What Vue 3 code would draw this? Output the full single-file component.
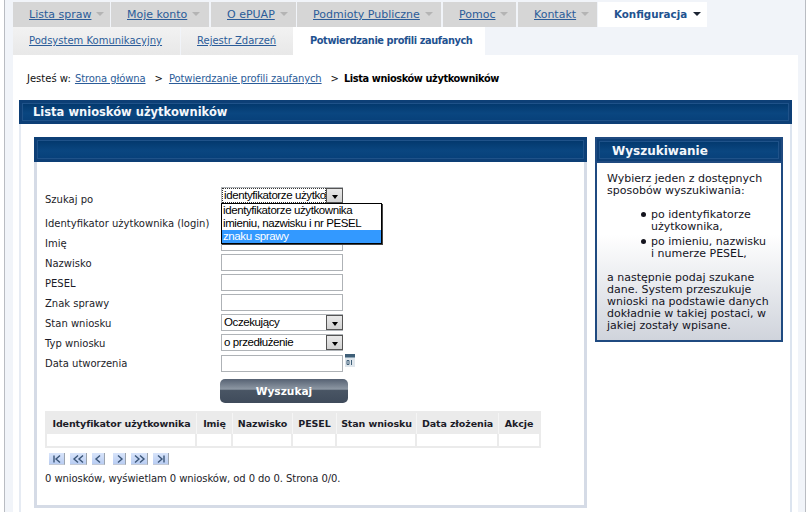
<script setup>
const topTabs = [
  { label: 'Lista spraw', w: 97, mr: 1 },
  { label: 'Moje konto', w: 98, mr: 2 },
  { label: 'O ePUAP', w: 85, mr: 1 },
  { label: 'Podmioty Publiczne', w: 144, mr: 2 },
  { label: 'Pomoc', w: 73, mr: 2 },
  { label: 'Kontakt', w: 79, mr: 1 },
]
const subTabs = [
  { label: 'Podsystem Komunikacyjny', w: 167, mr: 1 },
  { label: 'Rejestr Zdarzeń', w: 112, mr: 0 },
]
const columns = [
  { label: 'Identyfikator użytkownika', w: 150 },
  { label: 'Imię', w: 36 },
  { label: 'Nazwisko', w: 60 },
  { label: 'PESEL', w: 44 },
  { label: 'Stan wniosku', w: 80 },
  { label: 'Data złożenia', w: 82 },
  { label: 'Akcje', w: 40 },
]
const pager = [
  { w: 16, d: 'M5 2.5v7M11 2.5L7 6l4 3.5' },
  { w: 17, d: 'M8 2.5L4 6l4 3.5M13 2.5L9 6l4 3.5' },
  { w: 13, d: 'M8 2.5L4 6l4 3.5' },
  { w: 13, d: 'M5 2.5L9 6l-4 3.5' },
  { w: 17, d: 'M4 2.5L8 6l-4 3.5M9 2.5l4 3.5-4 3.5' },
  { w: 16, d: 'M5 2.5L9 6l-4 3.5M11 2.5v7' },
]
const pagerGaps = [5, 5, 8, 5, 5, 0]
</script>

<template>
  <div class="page">
    <nav class="tabs top">
      <a
        v-for="t in topTabs"
        :key="t.label"
        class="tab"
        :style="{ width: t.w + 'px', marginRight: t.mr + 'px' }"
      >
        <span class="link">{{ t.label }}</span><i class="caret"></i>
      </a>
      <a class="tab active-top"><span>Konfiguracja</span><i class="caret dark"></i></a>
    </nav>
    <nav class="tabs sub">
      <a
        v-for="t in subTabs"
        :key="t.label"
        class="subtab"
        :style="{ width: t.w + 'px', marginRight: t.mr + 'px' }"
      >
        <span class="link">{{ t.label }}</span>
      </a>
      <a class="subtab active-sub">Potwierdzanie profili zaufanych</a>
    </nav>

    <main class="content">
      <div class="crumbs">
        Jesteś w: <span class="link first-link">Strona główna</span>
        <span class="sep">&gt;</span>
        <span class="link">Potwierdzanie profili zaufanych</span>
        <span class="sep">&gt;</span>
        <b>Lista wniosków użytkowników</b>
      </div>

      <section class="outer">
        <h1 class="bar main-bar">Lista wniosków użytkowników</h1>
        <div class="columns">
          <div class="panel">
            <div class="bar panel-bar"></div>
            <div class="panel-body">
              <form class="form" @submit.prevent>
                <label class="lead">Szukaj po</label>
                <div class="control drop-host">
                  <div class="select first">
                    <span class="val focus">identyfikatorze użytkownika</span><span class="arrow"><i></i></span>
                  </div>
                  <ul class="dropdown">
                    <li>identyfikatorze użytkownika</li>
                    <li>imieniu, nazwisku i nr PESEL</li>
                    <li class="sel">znaku sprawy</li>
                  </ul>
                </div>
                <label>Identyfikator użytkownika (login)</label>
                <div class="control"><div class="input"></div></div>
                <label>Imię</label>
                <div class="control"><div class="input"></div></div>
                <label>Nazwisko</label>
                <div class="control"><div class="input"></div></div>
                <label>PESEL</label>
                <div class="control"><div class="input"></div></div>
                <label>Znak sprawy</label>
                <div class="control"><div class="input"></div></div>
                <label>Stan wniosku</label>
                <div class="control">
                  <div class="select"><span class="val">Oczekujący</span><span class="arrow"><i></i></span></div>
                </div>
                <label>Typ wniosku</label>
                <div class="control">
                  <div class="select"><span class="val">o przedłużenie</span><span class="arrow"><i></i></span></div>
                </div>
                <label>Data utworzenia</label>
                <div class="control date">
                  <div class="input"></div>
                  <svg class="cal" width="10" height="13" viewBox="0 0 10 13">
                    <rect x="0" y="0" width="10" height="13" fill="#dfe6ec" />
                    <rect x="0" y="0" width="10" height="3" fill="#3f5f78" />
                    <rect x="0" y="3" width="10" height="1" fill="#8fa5b5" />
                    <path d="M2 6.5h2v4H2zM6.5 6v5" stroke="#3f5f78" fill="none" />
                  </svg>
                </div>
              </form>

              <button class="search" type="button">Wyszukaj</button>

              <table class="grid">
                <thead>
                  <tr>
                    <th v-for="c in columns" :key="c.label" :style="{ width: c.w + 'px' }">{{ c.label }}</th>
                  </tr>
                </thead>
                <tbody>
                  <tr><td v-for="c in columns" :key="c.label"></td></tr>
                </tbody>
              </table>

              <div class="pager">
                <span
                  v-for="(p, i) in pager"
                  :key="i"
                  class="pg"
                  :style="{ width: p.w + 'px', marginRight: pagerGaps[i] + 'px' }"
                >
                  <svg :width="p.w" height="12" :viewBox="`0 0 ${p.w} 12`">
                    <path :d="p.d" fill="none" stroke="#3a5578" stroke-width="1.4" />
                  </svg>
                </span>
              </div>
              <p class="summary">0 wniosków, wyświetlam 0 wniosków, od 0 do 0. Strona 0/0.</p>
            </div>
          </div>

          <aside class="side">
            <h2 class="side-title">Wyszukiwanie</h2>
            <div class="side-body">
              <p>Wybierz jeden z dostępnych sposobów wyszukiwania:</p>
              <ul>
                <li>po identyfikatorze użytkownika,</li>
                <li>po imieniu, nazwisku i numerze PESEL,</li>
              </ul>
              <p>a następnie podaj szukane dane. System przeszukuje wnioski na podstawie danych dokładnie w takiej postaci, w jakiej zostały wpisane.</p>
            </div>
          </aside>
        </div>
      </section>
    </main>
  </div>
</template>

<style>
html, body { margin: 0; background: #fff; overflow: hidden; }
</style>

<style scoped>
.page {
  box-sizing: border-box;
  width: 802px;
  height: 512px;
  margin-left: 4px;
  padding: 2px 0 0 8px;
  background: #f1f4f9;
  border-left: 1px solid #b9bcc2;
  border-right: 1px solid #b9bcc2;
  overflow: hidden;
  font: 11px/13px "DejaVu Sans", Verdana, sans-serif;
  color: #14141e;
}
.link { color: #2b5c99; text-decoration: underline; }
.tabs { display: flex; }
.top { height: 25px; }
.tab {
  box-sizing: border-box;
  display: flex;
  align-items: center;
  padding-left: 16px;
  background: #d6d6d6;
  white-space: nowrap;
}
.caret {
  display: inline-block;
  margin-left: 5px;
  margin-top: -2px;
  border: 4px solid transparent;
  border-top: 4px solid #b4b4b4;
  border-bottom: 0;
  width: 0;
  height: 0;
}
.caret.dark { border-top-color: #1c2433; margin-left: 6px; }
.active-top {
  width: 109px;
  background: #fff;
  color: #22528f;
  font-weight: 700;
  font-size: 10.3px;
}
.sub { height: 28px; font-size: 10px; }
.subtab {
  box-sizing: border-box;
  display: flex;
  align-items: center;
  padding: 0 0 1px 16px;
  background: linear-gradient(#f2f2f2, #e8e8e8);
  white-space: nowrap;
}
.active-sub {
  width: 192px;
  padding-left: 17px;
  background: #fff;
  color: #1f5290;
  font-weight: 700;
  font-size: 9.8px;
  letter-spacing: -0.4px;
}
.content {
  box-sizing: border-box;
  width: 785px;
  height: 460px;
  padding: 0 6px;
  background: #fff;
}
.crumbs { box-sizing: border-box; height: 45px; padding: 17px 0 0 8px; color: #111; font-size: 10px; white-space: nowrap; }
.crumbs .link { letter-spacing: -0.1px; }
.first-link { margin-left: 1px; }
.crumbs b { color: #000; font-size: 9.8px; letter-spacing: -0.4px; margin-left: -1px; }
.sep { margin: 0 6px 0 9px; color: #111; }
.outer { display: flex; flex-direction: column; }
.bar {
  box-sizing: border-box;
  margin: 0;
  background: linear-gradient(#003366 0%, #0a4680 55%, #063e77 100%);
  box-shadow: inset 0 0 0 3px #0d3f76, inset 0 0 0 4px #1f5289;
}
.main-bar {
  height: 24px;
  width: 773px;
  padding: 5px 0 0 14px;
  color: #f4f7fb;
  font: 700 11.5px/15px "DejaVu Sans", Verdana, sans-serif;
}
.columns {
  display: flex;
  align-items: flex-start;
  width: 773px;
  height: 388px;
  padding: 13px 0 0 13px;
  box-sizing: border-box;
  border-left: 2px solid #e6ebf3;
  border-right: 2px solid #dce4ef;
}
.panel { width: 553px; flex: none; }
.panel-bar { height: 25px; }
.panel-body {
  box-sizing: border-box;
  height: 346px;
  padding: 25px 0 0 8px;
  border: 3px solid #d5dbe6;
  border-top: 0;
  background: #fff;
  position: relative;
}
.form {
  display: grid;
  grid-template-columns: 176px 122px;
  grid-template-rows: 27px repeat(7, 20px) 20px;
  align-items: start;
  color: #1c1c28;
  font-size: 10px;
}
.form label { white-space: nowrap; padding-top: 3px; }
.form .lead { padding-top: 6px; }
.control { position: relative; height: 17px; width: 122px; }
.input {
  box-sizing: border-box;
  height: 17px;
  width: 122px;
  border: 1px solid #aeb2b6;
  background: #fff;
}
.select {
  box-sizing: border-box;
  display: flex;
  height: 17px;
  width: 122px;
  border: 1px solid #b0b4b8;
  border-right: 0;
  font: 11.5px/15px "Liberation Sans", Arial, sans-serif;
  letter-spacing: -0.4px;
  color: #000;
  background: #fff;
  overflow: hidden;
}
.val { flex: 1; min-width: 0; padding-left: 2px; white-space: nowrap; overflow: hidden; }
.focus { outline: 1px dotted #333; outline-offset: -1px; }
.arrow {
  box-sizing: border-box;
  flex: none;
  width: 17px;
  height: 100%;
  display: flex;
  align-items: flex-end;
  justify-content: center;
  padding-bottom: 3px;
  background: linear-gradient(#e9e9e9, #d2d2d2);
  border: 1px solid #555;
}
.arrow i {
  width: 0;
  height: 0;
  border: 3.5px solid transparent;
  border-top: 4px solid #000;
  border-bottom: 0;
}
.drop-host { z-index: 2; }
.dropdown {
  position: absolute;
  left: 0;
  top: 16px;
  box-sizing: border-box;
  width: 161px;
  height: 41px;
  margin: 0;
  padding: 0;
  list-style: none;
  background: #fff;
  border: 1px solid #000;
  box-shadow: 1px 1px 0 #444;
  font: 11.5px/13px "Liberation Sans", Arial, sans-serif;
  letter-spacing: -0.4px;
  color: #000;
}
.dropdown li { height: 13px; padding-left: 1px; white-space: nowrap; }
.dropdown .sel { background: #3399ff; color: #fff; }
.date { display: flex; gap: 2px; height: 17px; margin-top: 1px; }
.date .input { flex: none; }
.cal { flex: none; margin-top: -1px; }
.search {
  display: block;
  box-sizing: border-box;
  width: 128px;
  height: 24px;
  margin: 5px 0 0 175px;
  padding: 0;
  border: 0;
  border-radius: 5px;
  background: linear-gradient(#566273 0%, #8d97a3 42%, #495564 48%, #3f4b5b 100%);
  color: #fff;
  font: 700 10.6px/24px "DejaVu Sans", Verdana, sans-serif;
}
.grid {
  box-sizing: border-box;
  margin-top: 8px;
  width: 496px;
  table-layout: fixed;
  border-collapse: separate;
  border-spacing: 0;
  border: 2px solid #ebebeb;
  background: #ebebeb;
}
.grid th {
  box-sizing: border-box;
  height: 21px;
  padding: 0;
  background: #ebebeb;
  border-right: 1px solid #f5f5f5;
  color: #1c1c28;
  font: 700 9.5px/13px "DejaVu Sans", Verdana, sans-serif;
  letter-spacing: -0.1px;
  text-align: center;
  white-space: nowrap;
}
.grid th:last-child { border-right: 0; }
.grid td {
  box-sizing: border-box;
  height: 12px;
  padding: 0;
  background: #fff;
  border-right: 2px solid #ebebeb;
}
.grid td:last-child { border-right: 0; }
.pager { display: flex; margin: 5px 0 0 4px; height: 12px; }
.pg {
  box-sizing: border-box;
  display: block;
  height: 12px;
  background: linear-gradient(#d8e4fa, #b9cdf2);
  border-right: 1px solid #9aa3ae;
  border-bottom: 1px solid #c5cbd6;
}
.pg svg { display: block; }
.summary { margin: 7px 0 0; color: #1c1c28; font-size: 10px; letter-spacing: -0.07px; }
.side {
  flex: none;
  width: 188px;
  height: 205px;
  margin-left: 8px;
  box-sizing: border-box;
  border: 2px solid #1f4a80;
  border-top: 0;
  background: linear-gradient(#fff 0%, #fff 48%, #d0d4dc 100%);
}
.side-title {
  box-sizing: border-box;
  height: 26px;
  margin: 0 -2px;
  padding: 7px 0 0 17px;
  color: #f4f7fb;
  font: 700 12px/15px "DejaVu Sans", Verdana, sans-serif;
  background: linear-gradient(#003366 0%, #0a4680 55%, #063e77 100%);
  box-shadow: inset 0 0 0 2px #1f4a80, inset 0 0 0 4px #0d3f76, inset 0 0 0 5px #1f5289;
}
.side-body { padding: 10px 8px 0 10px; line-height: 12px; color: #14141e; }
.side-body p { margin: 0; }
.side-body ul { margin: 12px 0 12px; padding: 0 5px 0 44px; list-style: none; }
.side-body li { position: relative; margin-bottom: 3px; }
.side-body li::before {
  content: "";
  position: absolute;
  left: -10px;
  top: 3px;
  width: 5px;
  height: 5px;
  border-radius: 50%;
  background: #14141e;
}
</style>
